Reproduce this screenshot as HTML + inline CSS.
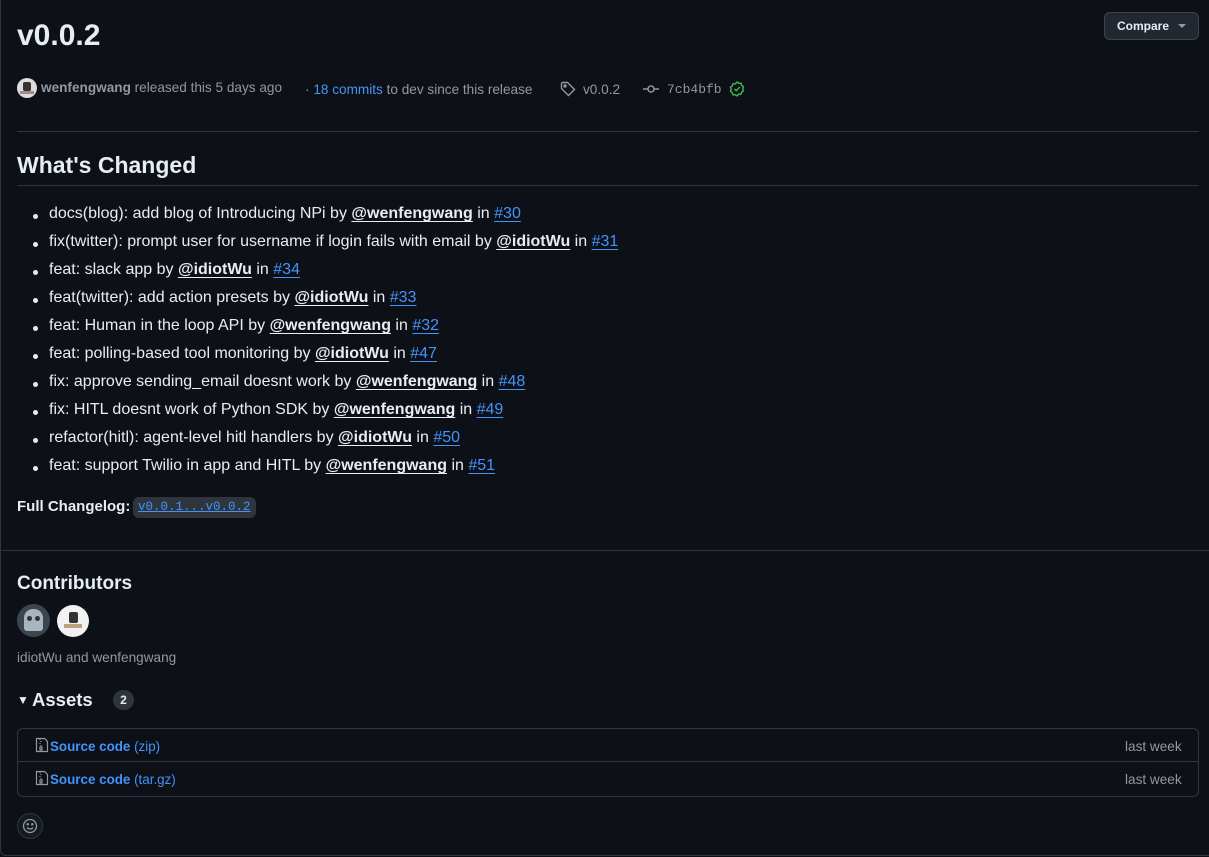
<!DOCTYPE html>
<html><head><meta charset="utf-8"><style>
*{margin:0;padding:0;box-sizing:border-box}
body{width:1209px;height:857px;background:#0d1117;color:#e6edf3;font-family:"Liberation Sans",sans-serif;position:relative;overflow:hidden}
.a{position:absolute;white-space:nowrap}
.card{position:absolute;left:0;top:-5px;width:1215px;height:861px;border:1px solid #30363d;border-radius:6px}
.muted{color:#9198a1}
a{color:#4493f8;text-decoration:none}
ul{list-style:none}
li{position:absolute;left:49px;font-size:16px;white-space:nowrap}
li:before{content:"";position:absolute;left:-16px;top:9px;width:5px;height:5px;border-radius:50%;background:#e6edf3}
li b{text-decoration:underline;text-underline-offset:3px;font-weight:bold}
li a{text-decoration:underline;text-underline-offset:3px}
.hr{position:absolute;height:1px;background:#30363d}
</style></head><body>
<div class="card"></div>
<div class="a" style="left:17px;top:19px;font-size:30px;font-weight:bold">v0.0.2</div>
<div class="a" style="left:1104px;top:12px;width:95px;height:28px;background:#212830;border:1px solid #3d444d;border-radius:6px;font-size:12px;font-weight:bold;line-height:26px;padding-left:12px">Compare<span style="position:absolute;right:12px;top:11px;border-left:4px solid transparent;border-right:4px solid transparent;border-top:4px solid #9198a1"></span></div>

<div class="a" style="left:17px;top:78px;width:20px;height:20px;border-radius:50%;background:#ddd"><div style="position:absolute;left:6px;top:4px;width:8px;height:9px;background:#333;border-radius:2px"></div><div style="position:absolute;left:3px;top:13px;width:14px;height:3px;background:#a88"></div></div>
<div class="a muted" style="left:41px;top:80px;font-size:13.6px"><b style="color:#9198a1">wenfengwang</b> released this 5 days ago</div>
<div class="a muted" style="left:305px;top:82px;font-size:13.6px">· <a href="#">18 commits</a> to dev since this release</div>
<svg class="a" style="left:560px;top:81px" width="16" height="16" viewBox="0 0 16 16" fill="none" stroke="#9198a1" stroke-width="1.4"><path d="M1.5 2.5v5l7 7 6-6-7-7h-5z"/><circle cx="5" cy="5" r="1" fill="#9198a1"/></svg>
<div class="a muted" style="left:583px;top:82px;font-size:13.6px">v0.0.2</div>
<svg class="a" style="left:643px;top:81px" width="16" height="16" viewBox="0 0 16 16" fill="none" stroke="#9198a1" stroke-width="1.5"><circle cx="8" cy="8" r="3"/><path d="M0 8h5M11 8h5"/></svg>
<div class="a muted" style="left:667px;top:82px;font-size:13px;font-family:'Liberation Mono',monospace">7cb4bfb</div>
<svg class="a" style="left:729px;top:81px" width="16" height="16" viewBox="0 0 16 16" fill="none" stroke="#3fb950" stroke-width="1.4"><path d="M8 1l1.8 1.3 2.2-.1.7 2.1 1.8 1.3-.7 2.1.7 2.1-1.8 1.3-.7 2.1-2.2-.1L8 15l-1.8-1.3-2.2.1-.7-2.1-1.8-1.3.7-2.1-.7-2.1 1.8-1.3.7-2.1 2.2.1z"/><path d="M5.5 8l1.8 1.8L10.8 6"/></svg>

<div class="hr" style="left:17px;top:131px;width:1182px"></div>
<div class="a" style="left:17px;top:152px;font-size:23px;font-weight:bold">What's Changed</div>
<div class="hr" style="left:17px;top:185px;width:1182px"></div>

<ul>
<li style="top:205px">docs(blog): add blog of Introducing NPi by <b>@wenfengwang</b> in <a href="#">#30</a></li>
<li style="top:233px">fix(twitter): prompt user for username if login fails with email by <b>@idiotWu</b> in <a href="#">#31</a></li>
<li style="top:261px">feat: slack app by <b>@idiotWu</b> in <a href="#">#34</a></li>
<li style="top:289px">feat(twitter): add action presets by <b>@idiotWu</b> in <a href="#">#33</a></li>
<li style="top:317px">feat: Human in the loop API by <b>@wenfengwang</b> in <a href="#">#32</a></li>
<li style="top:345px">feat: polling-based tool monitoring by <b>@idiotWu</b> in <a href="#">#47</a></li>
<li style="top:373px">fix: approve sending_email doesnt work by <b>@wenfengwang</b> in <a href="#">#48</a></li>
<li style="top:401px">fix: HITL doesnt work of Python SDK by <b>@wenfengwang</b> in <a href="#">#49</a></li>
<li style="top:429px">refactor(hitl): agent-level hitl handlers by <b>@idiotWu</b> in <a href="#">#50</a></li>
<li style="top:457px">feat: support Twilio in app and HITL by <b>@wenfengwang</b> in <a href="#">#51</a></li>
</ul>
<div class="a" style="left:17px;top:498px;font-size:15px;font-weight:bold">Full Changelog:</div>
<div class="a" style="left:133px;top:497px;height:21px;padding:0 5px;background:#2f353d;border-radius:6px;font-family:'Liberation Mono',monospace;font-size:12.5px;line-height:21px"><a href="#" style="text-decoration:underline">v0.0.1...v0.0.2</a></div>

<div class="hr" style="left:0;top:550px;width:1209px"></div>
<div class="a" style="left:17px;top:573px;font-size:19px;font-weight:bold">Contributors</div>
<div class="a" style="left:17px;top:604px;width:33px;height:33px;border-radius:50%;background:#3a4550"><div style="position:absolute;left:7px;top:5px;width:19px;height:22px;background:#a8b4be;border-radius:9px 9px 3px 3px"></div><div style="position:absolute;left:10px;top:12px;width:5px;height:5px;background:#333;border-radius:50%"></div><div style="position:absolute;left:18px;top:12px;width:5px;height:5px;background:#333;border-radius:50%"></div></div>
<div class="a" style="left:57px;top:605px;width:32px;height:32px;border-radius:50%;background:#f2f2f2"><div style="position:absolute;left:12px;top:7px;width:9px;height:11px;background:#333;border-radius:2px"></div><div style="position:absolute;left:7px;top:19px;width:18px;height:4px;background:#b9a27e"></div></div>
<div class="a muted" style="left:17px;top:650px;font-size:13.6px">idiotWu and wenfengwang</div>
<div class="a" style="left:17px;top:693px;font-size:12px">▼</div>
<div class="a" style="left:32px;top:689px;font-size:18.5px;font-weight:bold">Assets</div>
<div class="a" style="left:113px;top:690px;width:21px;height:20px;border-radius:10px;background:#2f353d;font-size:12px;font-weight:bold;text-align:center;line-height:20px">2</div>

<div class="a" style="left:17px;top:728px;width:1182px;height:69px;border:1px solid #30363d;border-radius:6px"></div>
<div class="hr" style="left:17px;top:761px;width:1182px"></div>
<svg class="a" style="left:35px;top:737px" width="14" height="16" viewBox="0 0 14 16" fill="none" stroke="#9198a1" stroke-width="1.2"><path d="M1.5 1.5h8l3 3v10h-11z"/><path d="M5 2v1M6 4v1M5 6v1M6 8v1M5 10h2v3H5z"/></svg>
<div class="a" style="left:50px;top:739px;font-size:13.4px"><a href="#"><b>Source code</b> (zip)</a></div>
<svg class="a" style="left:35px;top:770px" width="14" height="16" viewBox="0 0 14 16" fill="none" stroke="#9198a1" stroke-width="1.2"><path d="M1.5 1.5h8l3 3v10h-11z"/><path d="M5 2v1M6 4v1M5 6v1M6 8v1M5 10h2v3H5z"/></svg>
<div class="a" style="left:50px;top:772px;font-size:13.4px"><a href="#"><b>Source code</b> (tar.gz)</a></div>
<div class="a muted" style="left:1125px;top:739px;font-size:13.6px">last week</div>
<div class="a muted" style="left:1125px;top:772px;font-size:13.6px">last week</div>

<div class="a" style="left:17px;top:813px;width:26px;height:26px;border-radius:50%;background:#161b22;border:1px solid #30363d"></div>
<svg class="a" style="left:22px;top:818px" width="16" height="16" viewBox="0 0 16 16" fill="none" stroke="#9198a1" stroke-width="1.3"><circle cx="8" cy="8" r="6.5"/><path d="M5 9.5c1.5 2 4.5 2 6 0"/><circle cx="5.7" cy="6.3" r=".6" fill="#9198a1"/><circle cx="10.3" cy="6.3" r=".6" fill="#9198a1"/></svg>
</body></html>
